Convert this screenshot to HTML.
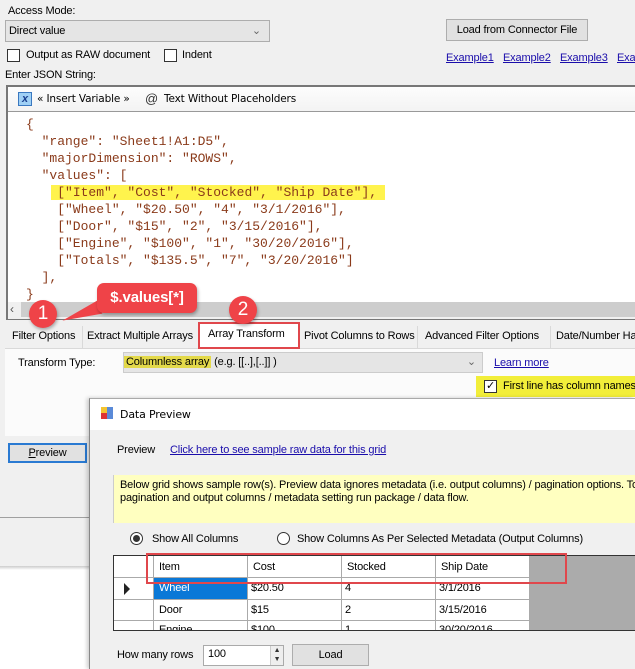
<!DOCTYPE html>
<html style="overflow:hidden"><head><style>
*{margin:0;padding:0;box-sizing:border-box}
html,body{width:635px;height:669px;overflow:hidden}
body{background:#fff;font-family:"Liberation Sans",sans-serif;font-size:11px;letter-spacing:-0.15px;color:#000;position:relative}
.a{position:absolute;white-space:nowrap}
.lnk{text-decoration:underline;color:#1a0dab}
.cb{position:absolute;width:13px;height:13px;border:1px solid #333;background:#fff}
.mono{font-family:"Liberation Mono",monospace;font-size:13px;letter-spacing:0;color:#8a3a1a}
.tab{position:absolute;top:326px;height:22px;line-height:20px;padding-left:4px;border-right:1px solid #d9d9d9;white-space:nowrap;overflow:hidden}
</style></head><body>
<div class="a" style="left:0;top:0;width:635px;height:568px;background:#f0f0f0"></div>
<div class="a" style="left:8px;top:5px">Access Mode:</div>
<div class="a" style="left:5px;top:20px;width:265px;height:22px;background:#e5e5e5;border:1px solid #adadad;line-height:20px;padding-left:3px">Direct value<span style="position:absolute;right:8px;color:#666">&#8964;</span></div>
<div class="cb" style="left:7px;top:49px"></div><div class="a" style="left:26px;top:49px">Output as RAW document</div>
<div class="cb" style="left:164px;top:49px"></div><div class="a" style="left:182px;top:49px">Indent</div>
<div class="a" style="left:5px;top:69px">Enter JSON String:</div>
<div class="a" style="left:446px;top:19px;width:142px;height:22px;background:#e1e1e1;border:1px solid #adadad;text-align:center;line-height:20px">Load from Connector File</div>
<div class="a lnk" style="left:446px;top:52px">Example1</div>
<div class="a lnk" style="left:503px;top:52px">Example2</div>
<div class="a lnk" style="left:560px;top:52px">Example3</div>
<div class="a lnk" style="left:617px;top:52px">Exa</div>
<div class="a" style="left:6px;top:85px;width:629px;height:235px;background:#fff;border:2px solid #777;border-right:none"></div>
<div class="a" style="left:8px;top:87px;width:627px;height:25px;background:linear-gradient(#fdfdfd,#f3f3f3);border-bottom:1px solid #999"></div>
<div class="a" style="left:18px;top:92px;width:14px;height:14px;background:#9fd0f5;border:1px solid #3a78c0;color:#1a3f8f;font-size:11px;font-style:italic;font-weight:bold;text-align:center;line-height:12px">x</div>
<div class="a" style="left:37px;top:93px;font-family:'DejaVu Sans',sans-serif;font-size:10.5px">« Insert Variable »</div>
<div class="a" style="left:145px;top:91px;font-size:13px;color:#333">@</div>
<div class="a" style="left:164px;top:93px;font-family:'DejaVu Sans',sans-serif;font-size:10.5px">Text Without Placeholders</div>
<div class="a mono" style="left:26px;top:116px;line-height:17px;white-space:pre">{
  "range": "Sheet1!A1:D5",
  "majorDimension": "ROWS",
  "values": [
    <span style="background:#fff34d;padding:0 0 0 6px;margin-left:-6px">["Item", "Cost", "Stocked", "Ship Date"], </span>
    ["Wheel", "$20.50", "4", "3/1/2016"],
    ["Door", "$15", "2", "3/15/2016"],
    ["Engine", "$100", "1", "30/20/2016"],
    ["Totals", "$135.5", "7", "3/20/2016"]
  ],
}</div>
<div class="a" style="left:8px;top:302px;width:627px;height:17px;background:#f0f0f0"></div>
<div class="a" style="left:21px;top:302px;width:614px;height:15px;background:#cdcdcd"></div>
<div class="a" style="left:10px;top:302px;color:#555;font-size:12px">&lsaquo;</div>
<div class="a" style="left:5px;top:348px;width:630px;height:88px;background:#fbfbfb;border-top:1px solid #d9d9d9"></div>
<div class="tab" style="left:8px;width:75px">Filter Options</div>
<div class="tab" style="left:83px;width:117px">Extract Multiple Arrays</div>
<div class="tab" style="left:200px;top:323px;height:26px;width:100px;background:#fff;line-height:22px;padding-left:8px">Array Transform</div>
<div class="tab" style="left:300px;width:118px">Pivot Columns to Rows</div>
<div class="tab" style="left:418px;width:133px;padding-left:7px">Advanced Filter Options</div>
<div class="tab" style="left:551px;width:84px;padding-left:5px;border-right:none">Date/Number Ha</div>
<div class="a" style="left:198px;top:322px;width:102px;height:27px;border:2px solid #e0474c"></div>
<div class="a" style="left:18px;top:357px">Transform Type:</div>
<div class="a" style="left:123px;top:352px;width:360px;height:21px;background:#e5e5e5;border:1px solid #ccc;line-height:19px"><span style="background:#e3d94a;padding:0 2px">Columnless array</span> (e.g. [[..],[..]] )<span style="position:absolute;right:6px;color:#666">&#8964;</span></div>
<div class="a lnk" style="left:494px;top:357px">Learn more</div>
<div class="a" style="left:476px;top:376px;width:159px;height:21px;background:#f2ee3a"></div>
<div class="cb" style="left:484px;top:380px;font-size:11px;line-height:10px;text-align:center">✓</div>
<div class="a" style="left:503px;top:380px">First line has column names</div>
<div class="a" style="left:8px;top:443px;width:79px;height:20px;border:2px solid #2a7ad2;background:#e1e1e1;text-align:center;line-height:16px"><u>P</u>review</div>
<div class="a" style="left:0;top:517px;width:90px;height:1px;background:#a0a0a0"></div>
<div class="a" style="left:0;top:566px;width:90px;height:4px;background:linear-gradient(#ccc,#fff)"></div>
<div class="a" style="left:60px;top:300px;width:0;height:0;border-top:7px solid transparent;border-bottom:7px solid transparent;border-right:40px solid #ef4348;transform:rotate(-20deg);transform-origin:right center"></div>
<div class="a" style="left:97px;top:283px;width:100px;height:30px;background:#ef4348;border-radius:7px;color:#fff;font-weight:bold;font-size:15px;text-align:center;line-height:30px;box-shadow:1px 2px 3px rgba(0,0,0,.3)">$.values[*]</div>
<div class="a" style="left:29px;top:300px;width:28px;height:28px;border-radius:50%;background:#ef4348;color:#fff;font-size:19px;text-align:center;line-height:28px;box-shadow:1px 2px 3px rgba(0,0,0,.3)">1</div>
<div class="a" style="left:229px;top:296px;width:28px;height:28px;border-radius:50%;background:#ef4348;color:#fff;font-size:19px;text-align:center;line-height:28px;box-shadow:1px 2px 3px rgba(0,0,0,.3)">2</div>
<div class="a" style="left:89px;top:398px;width:546px;height:271px;background:#f0f0f0;border-left:1px solid #888;border-top:1px solid #aaa;box-shadow:-2px 0 4px rgba(0,0,0,.2)"></div>
<div class="a" style="left:90px;top:399px;width:545px;height:31px;background:#fff"></div>
<div class="a" style="left:101px;top:407px;width:6px;height:6px;background:#f4c430"></div>
<div class="a" style="left:101px;top:413px;width:6px;height:6px;background:#d33"></div>
<div class="a" style="left:107px;top:407px;width:6px;height:12px;background:#5a8ad8"></div>
<div class="a" style="left:120px;top:408px;font-family:'DejaVu Sans',sans-serif;font-size:11px">Data Preview</div>
<div class="a" style="left:117px;top:444px">Preview</div>
<div class="a lnk" style="left:170px;top:444px">Click here to see sample raw data for this grid</div>
<div class="a" style="left:113px;top:475px;width:522px;height:48px;background:#ffffc0;border-left:1px solid #ccc;padding:4px 6px;line-height:13px;overflow:hidden">Below grid shows sample row(s). Preview data ignores metadata (i.e. output columns) / pagination options. To<br>pagination and output columns / metadata setting run package / data flow.</div>
<div class="a" style="left:130px;top:532px;width:13px;height:13px;border:1px solid #333;border-radius:50%;background:#fff"><div style="margin:2px;width:7px;height:7px;border-radius:50%;background:#333"></div></div>
<div class="a" style="left:152px;top:533px">Show All Columns</div>
<div class="a" style="left:277px;top:532px;width:13px;height:13px;border:1px solid #333;border-radius:50%;background:#fff"></div>
<div class="a" style="left:297px;top:533px">Show Columns As Per Selected Metadata (Output Columns)</div>
<div class="a" style="left:113px;top:555px;width:522px;height:76px;background:#ababab;border:1px solid #333;border-right:none;overflow:hidden">
 <div class="a" style="left:0;top:0;width:416px;height:76px;background:#fff"></div>
 <div class="a" style="left:0;top:21px;width:416px;height:1px;background:#aaa"></div>
 <div class="a" style="left:0;top:43px;width:416px;height:1px;background:#aaa"></div>
 <div class="a" style="left:0;top:64px;width:416px;height:1px;background:#aaa"></div>
 <div class="a" style="left:39px;top:0;width:1px;height:76px;background:#aaa"></div>
 <div class="a" style="left:133px;top:0;width:1px;height:76px;background:#aaa"></div>
 <div class="a" style="left:227px;top:0;width:1px;height:76px;background:#aaa"></div>
 <div class="a" style="left:321px;top:0;width:1px;height:76px;background:#aaa"></div>
 <div class="a" style="left:415px;top:0;width:1px;height:76px;background:#aaa"></div>
 <div class="a" style="left:40px;top:22px;width:93px;height:21px;background:#0a78d7"></div>
 <div class="a" style="left:10px;top:27px;width:0;height:0;border-top:6px solid transparent;border-bottom:6px solid transparent;border-left:6px solid #222"></div>
 <div class="a" style="left:45px;top:5px">Item</div><div class="a" style="left:139px;top:5px">Cost</div><div class="a" style="left:233px;top:5px">Stocked</div><div class="a" style="left:327px;top:5px">Ship Date</div>
 <div class="a" style="left:45px;top:26px;color:#fff">Wheel</div><div class="a" style="left:137px;top:26px">$20.50</div><div class="a" style="left:231px;top:26px">4</div><div class="a" style="left:325px;top:26px">3/1/2016</div>
 <div class="a" style="left:45px;top:48px">Door</div><div class="a" style="left:137px;top:48px">$15</div><div class="a" style="left:231px;top:48px">2</div><div class="a" style="left:325px;top:48px">3/15/2016</div>
 <div class="a" style="left:45px;top:68px">Engine</div><div class="a" style="left:137px;top:68px">$100</div><div class="a" style="left:231px;top:68px">1</div><div class="a" style="left:325px;top:68px">30/20/2016</div>
</div>
<div class="a" style="left:146px;top:553px;width:421px;height:31px;border:2px solid #e0474c"></div>
<div class="a" style="left:117px;top:649px">How many rows</div>
<div class="a" style="left:203px;top:645px;width:81px;height:21px;background:#fff;border:1px solid #aaa;padding:2px 4px">100</div>
<div class="a" style="left:270px;top:646px;width:13px;height:19px;background:#eee;border-left:1px solid #ccc;font-size:7px;line-height:9px;text-align:center;color:#333">▲<br>▼</div>
<div class="a" style="left:292px;top:644px;width:77px;height:22px;background:#e1e1e1;border:1px solid #adadad;text-align:center;line-height:20px">Load</div>
</body></html>
